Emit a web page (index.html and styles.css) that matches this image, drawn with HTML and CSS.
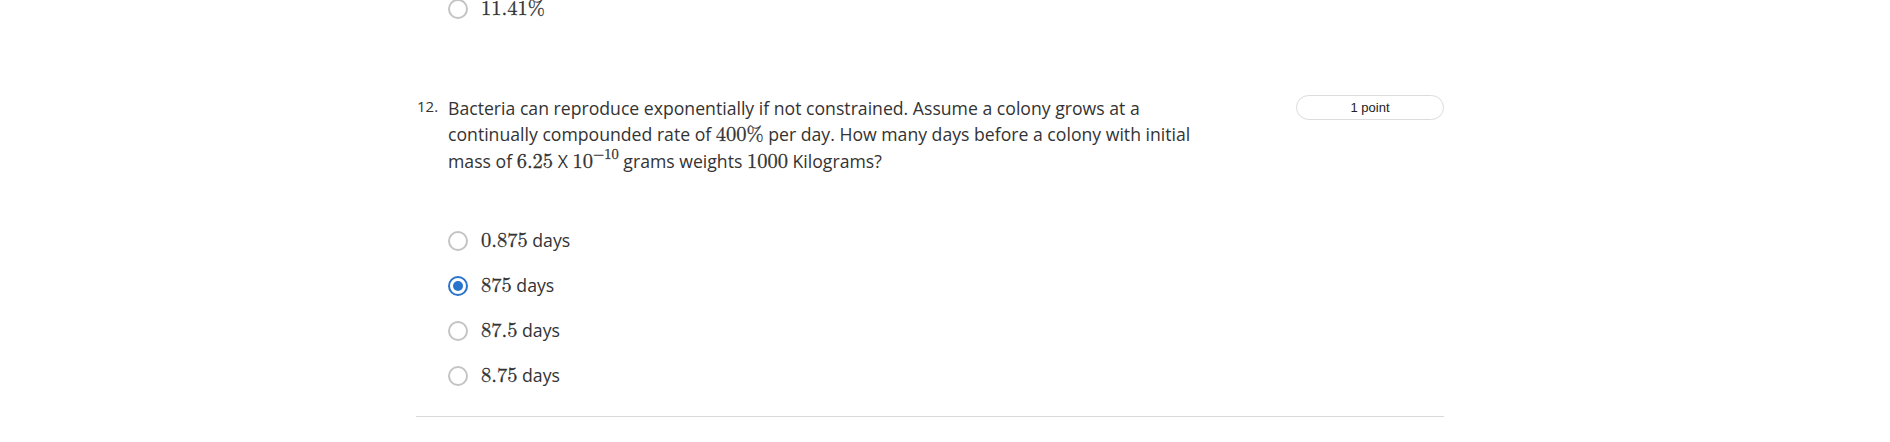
FILE: index.html
```html
<!DOCTYPE html>
<html>
<head>
<meta charset="utf-8">
<link rel="stylesheet" href="styles.css">
</head>
<body>
<div class="page">
  <div class="options prev">
    <label class="option"><span class="radio"></span><span class="opt-text"><span class="math">11.41%</span></span></label>
  </div>
  <div class="question">
    <div class="q-head">
      <div class="q-num">12.</div>
      <div class="q-body">Bacteria can reproduce exponentially if not constrained. Assume a colony grows at a continually compounded rate of <span class="math">400%</span> per day. How many days before a colony with initial mass of <span class="math">6.25</span> X <span class="math">10<sup>−10</sup></span> grams weights <span class="math">1000</span> Kilograms?</div>
      <div class="points">1 point</div>
    </div>
    <div class="options">
      <label class="option"><span class="radio"></span><span class="opt-text"><span class="math">0.875</span> days</span></label>
      <label class="option"><span class="radio checked"></span><span class="opt-text"><span class="math">875</span> days</span></label>
      <label class="option"><span class="radio"></span><span class="opt-text"><span class="math">87.5</span> days</span></label>
      <label class="option"><span class="radio"></span><span class="opt-text"><span class="math">8.75</span> days</span></label>
    </div>
    <div class="separator"></div>
  </div>
</div>
</body>
</html>
```
FILE: styles.css
```css
html, body {
  margin: 0;
  padding: 0;
  background: #fff;
}
body {
  font-family: "Open Sans", "Liberation Sans", sans-serif;
  color: #333;
  overflow: hidden;
  height: 442px;
}
.page {
  padding-left: 416px;
  width: 1028px;
}
.options {
  display: flex;
  flex-direction: column;
  padding-left: 32px;
}
.prev {
  margin-top: -14px;
}
.option {
  height: 45px;
  display: flex;
  align-items: center;
  gap: 13px;
  font-size: 17.7px;
}
.radio {
  width: 20px;
  height: 20px;
  box-sizing: border-box;
  border: 2px solid #c4c4c4;
  border-radius: 50%;
  flex: none;
  position: relative;
}
.radio.checked {
  border-color: #2a73cc;
}
.radio.checked::after {
  content: "";
  position: absolute;
  left: 3px;
  top: 3px;
  width: 10px;
  height: 10px;
  border-radius: 50%;
  background: #2a73cc;
}
.math {
  font-family: "Latin Modern Math", "Liberation Serif", "DejaVu Serif", serif;
  font-size: 20.5px;
  -webkit-text-stroke: 0.3px currentColor;
}
.math sup {
  font-size: 14.5px;
  line-height: 0;
  vertical-align: 9px;
}
.question {
  margin-top: 64px;
}
.q-head {
  display: flex;
  align-items: flex-start;
}
.q-num {
  width: 32px;
  flex: none;
  font-size: 15px;
  line-height: 26px;
  padding-left: 1px;
  box-sizing: border-box;
  margin-top: -2px;
}
.q-body {
  width: 760px;
  font-size: 17.65px;
  line-height: 26px;
}
.points {
  margin-left: auto;
  margin-top: 0;
  width: 148px;
  height: 25px;
  box-sizing: border-box;
  border: 1px solid #dcdcdc;
  border-radius: 12.5px;
  font-family: "Liberation Sans", Arial, sans-serif;
  font-size: 13px;
  line-height: 24px;
  text-align: center;
  color: #222;
}
.question .options {
  margin-top: 43px;
}
.separator {
  margin-top: 18px;
  border-top: 1px solid #d9d9d9;
}
```
